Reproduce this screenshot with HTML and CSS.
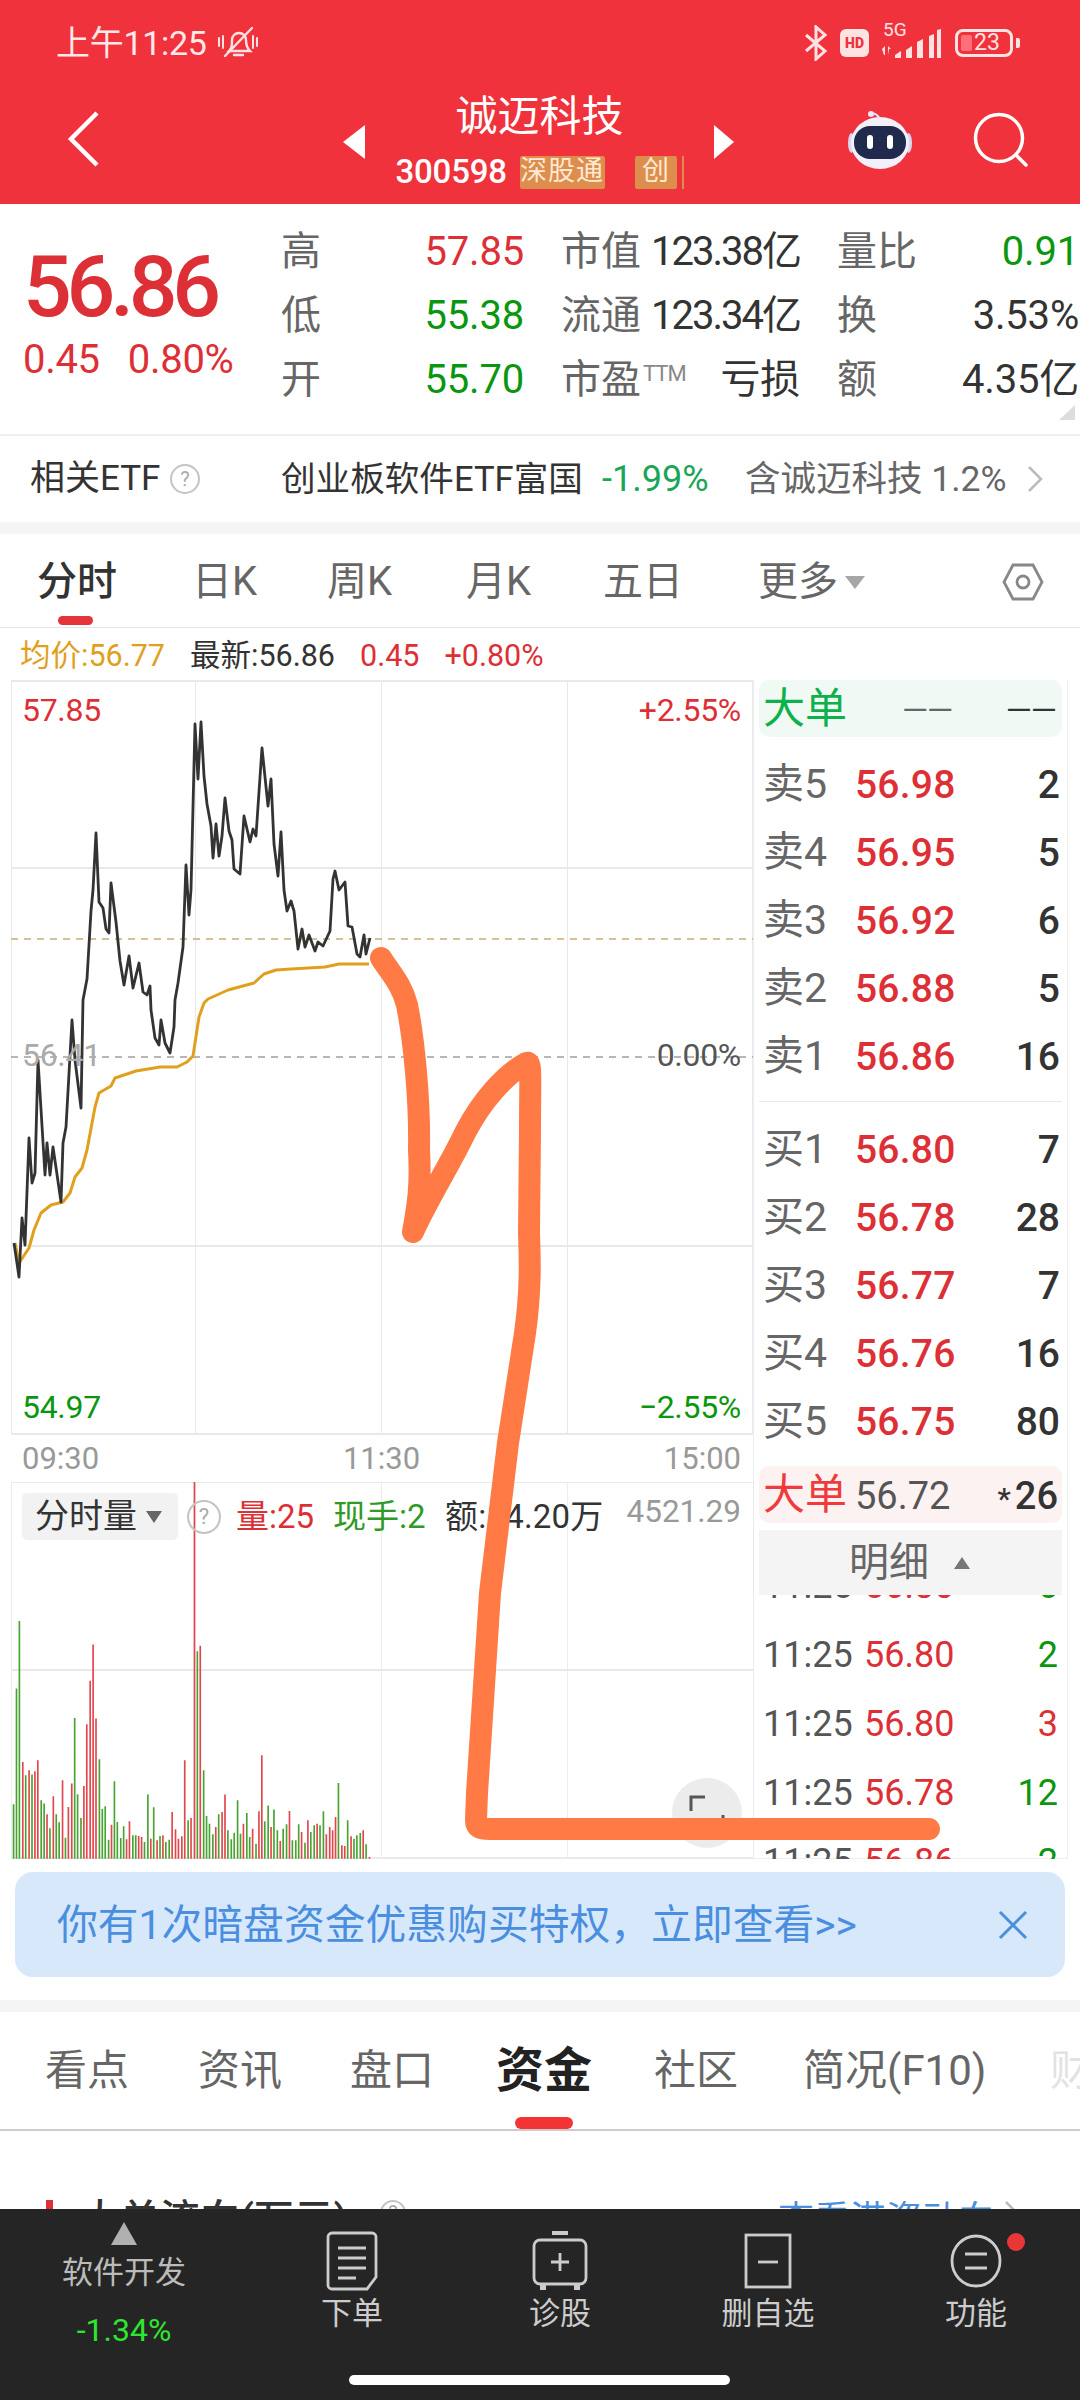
FILE: index.html
```html
<!DOCTYPE html>
<html lang="zh-CN">
<head>
<meta charset="utf-8">
<title>诚迈科技</title>
<link rel="stylesheet" href="styles.css">
</head>
<body>
<div class="app">
  <header class="top">
    <div class="status">
      <div class="status-left">
        <span class="clock">上午11:25</span>
        <svg class="ico-bell" viewBox="0 0 42 36" fill="none" stroke="#ffe3e3" stroke-width="2.4" stroke-linecap="round"><path d="M12 26c3-3 3-6 3-11 0-4 3-7 7-7s7 3 7 7c0 5 1 8 4 11z"/><path d="M17 30h9"/><path d="M8 31 35 3"/><path d="M2 13v8M6 11v12M36 11v12M40 13v8" stroke-width="2"/></svg>
      </div>
      <div class="status-right">
        <svg class="ico-bt" viewBox="0 0 24 36" fill="none" stroke="#ffe3e3" stroke-width="3"><path d="M2 10l19 16-9 8V2l9 8L2 26"/></svg>
        <span class="hd">HD</span>
        <div class="net">
          <span class="net-label">5G</span>
          <svg class="ico-sig" viewBox="0 0 60 30" fill="#ffe3e3"><path d="M1 20l3-3v9h-1zM7 26v-9l3 3h-2zM14 29h6v-7l-6 4zM25 29h6V17l-6 4zM36 29h6V10l-6 3zM48 29h5V5l-5 2zM56 29h4V0l-4 1z"/></svg>
        </div>
        <div class="battery"><span class="batt-fill"></span><span class="batt-num">23</span></div>
        <span class="batt-nub"></span>
      </div>
    </div>
    <nav class="nav">
      <div class="nav-back">
        <svg class="ico-back" viewBox="0 0 32 56" fill="none" stroke="#fff" stroke-width="4.5"><path d="M30 2 4 28l26 26"/></svg>
      </div>
      <div class="nav-center">
        <span class="tri-left"></span>
        <div class="nav-title">
          <div class="title">诚迈科技</div>
          <div class="code-row"><span class="code">300598</span><span class="badge badge-wide">深股通</span><span class="badge">创</span><span class="badge-cut"></span></div>
        </div>
        <span class="tri-right"></span>
      </div>
      <div class="nav-right">
        <svg class="ico-robot" viewBox="0 0 64 60"><path d="M32 10c-2-6-6-7-9-6" fill="none" stroke="#e6e4f7" stroke-width="2.2"/><circle cx="23" cy="4" r="3" fill="#e9e8fa"/><ellipse cx="3.500" cy="33" rx="3.500" ry="10" fill="#d8d6f0"/><ellipse cx="60.500" cy="33" rx="3.500" ry="10" fill="#d8d6f0"/><ellipse cx="32" cy="33" rx="29" ry="26" fill="#f1f0fb"/><rect x="6" y="16" width="52" height="33" rx="16" fill="#1f2a4d"/><rect x="19" y="25" width="6" height="14" rx="3" fill="#fff"/><rect x="39" y="25" width="6" height="14" rx="3" fill="#fff"/></svg>
        <svg class="ico-search" viewBox="0 0 56 56" fill="none" stroke="#fff" stroke-width="3.500"><circle cx="26" cy="26" r="23.500"/><path d="M43 43l10 10" stroke-linecap="round"/></svg>
      </div>
    </nav>
  </header>

  <section class="quote">
    <div class="q-left">
      <div class="q-price">56.86</div>
      <div class="q-change"><span>0.45</span><span>0.80%</span></div>
    </div>
    <div class="q-grid">
      <div class="q-cell"><span class="lbl">高</span><span class="up">57.85</span></div>
      <div class="q-cell"><span class="lbl">市值</span><span class="dark tight">123.38亿</span></div>
      <div class="q-cell"><span class="lbl">量比</span><span class="down">0.91</span></div>
      <div class="q-cell"><span class="lbl">低</span><span class="down">55.38</span></div>
      <div class="q-cell"><span class="lbl">流通</span><span class="dark tight">123.34亿</span></div>
      <div class="q-cell"><span class="lbl">换</span><span class="dark">3.53%</span></div>
      <div class="q-cell"><span class="lbl">开</span><span class="down">55.70</span></div>
      <div class="q-cell"><span class="lbl">市盈<sup class="ttm">TTM</sup></span><span class="dark">亏损</span></div>
      <div class="q-cell"><span class="lbl">额</span><span class="dark">4.35亿</span></div>
    </div>
    <span class="q-corner"></span>
  </section>

  <section class="etf">
    <span class="etf-title">相关ETF</span><span class="help etf-help">?</span>
    <span class="etf-name">创业板软件ETF富国</span>
    <span class="etf-pct">-1.99%</span>
    <span class="etf-note">含诚迈科技 1.2%</span>
    <svg class="ico-more" viewBox="0 0 16 28" fill="none" stroke="#bbb" stroke-width="2.500"><path d="M2 2l12 12L2 26"/></svg>
  </section>
  <div class="band"></div>

  <section class="tabs">
    <span class="tab tab-on w155">分时</span>
    <span class="tab w135">日K</span>
    <span class="tab w139">周K</span>
    <span class="tab w137">月K</span>
    <span class="tab w155">五日</span>
    <span class="tab">更多<i class="tri-down"></i></span>
    <svg class="ico-hex" viewBox="0 0 42 38" fill="none" stroke="#888" stroke-width="2.800"><path d="M11 2h20l9 17-9 17H11L2 19z"/><circle cx="21" cy="19" r="6"/></svg>
  </section>

  <section class="info">
    <span class="avg">均价:56.77</span>
    <span class="dark">最新:56.86</span>
    <span class="up">0.45</span>
    <span class="up">+0.80%</span>
  </section>

  <section class="board">
    <div class="charts">
      <div class="price-chart">
        <svg class="price-svg" viewBox="0 680 754 756" fill="none">
          <g stroke="#e9e9e9" stroke-width="1" shape-rendering="crispEdges">
            <path d="M195.500 680V1434M381.500 680V1434M567.500 680V1434M11.500 680V1434M752.500 680V1434"/>
            <path d="M11 868h742M11 1246h742M11 681h742M11 1434h742" stroke-width="2"/>
          </g>
          <path d="M11 939h742" stroke="#c9ab78" stroke-width="1.500" stroke-dasharray="7 6"/>
          <path d="M11 1057h742" stroke="#a0a0a0" stroke-width="1.500" stroke-dasharray="7 6"/>
          <path stroke="#e0a01e" stroke-width="3" stroke-linejoin="round" d="M15 1243 19 1263 29 1248 34 1230 41 1213 51 1205 63 1202 70 1193 75 1177 82 1168 87 1150 95 1107 99 1093 111 1086 115 1078 136 1071 160 1067 177 1067 187 1062 193 1056 199 1017 204 1003 208 999 228 990 254 983 264 974 276 970 291 969 325 967 339 964 369 964"/>
          <path stroke="#333" stroke-width="2.800" stroke-linejoin="round" d="M14 1243 19 1277 22 1218 25 1245 29 1138 32 1183 35 1173 38 1060 45 1175 47 1143 50 1175 53 1147 61 1202 63 1143 66 1127 72 1020 75 1060 81 1108 83 1000 87 979 91 911 93 890 96 833 99 902 103 908 106 929 109 933 111 883 116 922 120 961 124 985 129 956 133 988 139 963 143 992 147 995 150 986 151 1010 155 1038 159 1045 161 1020 165 1043 170 1053 174 1027 175 1000 178 983 183 947 186 865 189 915 191 890 195 724 198 779 201 722 204 776 207 804 211 826 213 858 216 824 219 856 222 836 225 798 229 831 232 840 234 869 240 874 244 816 250 842 253 829 256 836 262 748 268 806 271 779 274 844 278 876 281 832 284 890 287 911 291 901 294 911 298 949 302 929 305 947 309 935 315 951 318 942 323 946 330 931 333 879 335 871 339 890 345 882 348 926 352 927 357 954 360 957 364 935 366 954 370 938"/>
        </svg>
        <span class="cl cl-tl up">57.85</span>
        <span class="cl cl-tr up">+2.55%</span>
        <span class="cl cl-ml muted">56.41</span>
        <span class="cl cl-mr">0.00%</span>
        <span class="cl cl-bl down">54.97</span>
        <span class="cl cl-br down">−2.55%</span>
      </div>
      <div class="times"><span>09:30</span><span>11:30</span><span>15:00</span></div>
      <div class="vol-chart">
        <svg class="vol-svg" viewBox="0 66 1555 1130" preserveAspectRatio="none" fill="none">
          <g stroke="#e9e9e9" shape-rendering="crispEdges">
            <path d="M403 66V1195M787 66V1195M1170 66V1195M23 66V1195M1553 66V1195" stroke-width="2"/>
            <path d="M23 630H1553M23 67H1553M23 1194H1553" stroke-width="6"/>
          </g>
          <path stroke="#46a32f" stroke-width="3.400" d="M28 1195V1032M34 1195V685M40 1195V483M53 1195V945M66 1195V943M85 1195V1020M91 1195V1030M103 1195V1104M116 1195V1062M122 1195V1086M135 1195V1132M154 1195V773M160 1195V1002M167 1195V1073M205 1195V897M211 1195V1046M217 1195V1038M224 1195V1138M236 1195V963M242 1195V1085M249 1195V1133M255 1195V1098M274 1195V1125M280 1195V1125M298 1195V1145M305 1195V1003M317 1195V1041M330 1195V1127M342 1195V1145M349 1195V1138M388 1195V1080M407 1195V573M420 1195V930M426 1195V1067M432 1195V1090M439 1195V1122M451 1195V1062M470 1195V1110M477 1195V1137M483 1195V1117M490 1195V1020M496 1195V1120M509 1195V1058M515 1195V1130M528 1195V1150M546 1195V1083M553 1195V1036M565 1195V1048M572 1195V1110M584 1195V1105M591 1195V1092M603 1195V1140M610 1195V1140M616 1195V1092M629 1195V1147M641 1195V1115M648 1195V1095M660 1195V1095M667 1195V1053M698 1195V968M717 1195V1080M730 1195V1135M736 1195V1125M743 1195V1118M755 1195V1152"/>
          <path stroke="#e2454c" stroke-width="3.400" d="M47 1195V905M60 1195V930M72 1195V933M78 1195V900M97 1195V1062M110 1195V1008M129 1195V960M141 1195V1040M148 1195V970M173 1195V977M179 1195V792M186 1195V662M192 1195V553M198 1195V775M230 1195V1093M261 1195V1137M267 1195V1083M286 1195V1127M292 1195V1130M311 1195V1135M324 1195V1140M336 1195V1125M355 1195V1055M362 1195V1107M368 1195V1135M375 1195V1128M381 1195V900M394 1195V1073M401 1195V62M413 1195V557M445 1195V1100M458 1195V1055M464 1195V1003M502 1195V1090M521 1195V1105M534 1195V1053M540 1195V885M559 1195V1100M578 1195V1142M597 1195V1052M622 1195V1115M635 1195V1080M654 1195V1090M673 1195V1122M680 1195V1100M686 1195V1110M692 1195V1070M705 1195V1155M711 1195V1157M724 1195V1128M749 1195V1110M762 1195V1190"/>
        </svg>
        <div class="vol-head">
          <span class="vol-btn">分时量<i class="tri-down tri-dark"></i></span>
          <span class="help vol-help">?</span>
          <span class="up vol-a">量:25</span>
          <span class="vol-g vol-b">现手:2</span>
          <span class="dark vol-c">额:14.20万</span>
          <span class="vol-max">4521.29</span>
        </div>
        <span class="full">
          <svg class="ico-full" viewBox="0 0 36 36" fill="none" stroke="#555" stroke-width="3"><path d="M2 16V2h14M34 20v14H20"/></svg>
        </span>
      </div>
    </div>

    <aside class="book">
      <div class="big big-g"><span class="big-lbl">大单</span><span class="dash">——</span><span class="dash dash-d">——</span></div>
      <div class="levels">
        <div class="lv"><span class="lv-k">卖5</span><b>56.98</b><span class="lv-v">2</span></div>
        <div class="lv"><span class="lv-k">卖4</span><b>56.95</b><span class="lv-v">5</span></div>
        <div class="lv"><span class="lv-k">卖3</span><b>56.92</b><span class="lv-v">6</span></div>
        <div class="lv"><span class="lv-k">卖2</span><b>56.88</b><span class="lv-v">5</span></div>
        <div class="lv"><span class="lv-k">卖1</span><b>56.86</b><span class="lv-v">16</span></div>
      </div>
      <div class="book-sep"></div>
      <div class="levels">
        <div class="lv"><span class="lv-k">买1</span><b>56.80</b><span class="lv-v">7</span></div>
        <div class="lv"><span class="lv-k">买2</span><b>56.78</b><span class="lv-v">28</span></div>
        <div class="lv"><span class="lv-k">买3</span><b>56.77</b><span class="lv-v">7</span></div>
        <div class="lv"><span class="lv-k">买4</span><b>56.76</b><span class="lv-v">16</span></div>
        <div class="lv"><span class="lv-k">买5</span><b>56.75</b><span class="lv-v">80</span></div>
      </div>
      <div class="big big-r"><span class="big-lbl">大单</span><span class="big-p">56.72</span><span class="big-v"><i>*</i>26</span></div>
      <div class="detail-head">明细<i class="tri-up"></i></div>
      <div class="detail-clip">
        <div class="detail">
          <div class="dt"><span class="dt-t">11:25</span><span class="up">56.80</span><span class="dt-v down">5</span></div>
          <div class="dt"><span class="dt-t">11:25</span><span class="up">56.80</span><span class="dt-v down">2</span></div>
          <div class="dt"><span class="dt-t">11:25</span><span class="up">56.80</span><span class="dt-v up">3</span></div>
          <div class="dt"><span class="dt-t">11:25</span><span class="up">56.78</span><span class="dt-v down">12</span></div>
          <div class="dt"><span class="dt-t">11:25</span><span class="up">56.86</span><span class="dt-v down">2</span></div>
        </div>
      </div>
    </aside>
  </section>

  <section class="promo">
    <span class="promo-text">你有1次暗盘资金优惠购买特权，立即查看&gt;&gt;</span>
    <svg class="ico-x" viewBox="0 0 30 30" fill="none" stroke="#4a8fdf" stroke-width="3"><path d="M2 2l26 26M28 2 2 28"/></svg>
  </section>
  <div class="band band-2"></div>

  <section class="sub">
    <span class="sub-t w153">看点</span>
    <span class="sub-t w152">资讯</span>
    <span class="sub-t w146">盘口</span>
    <span class="sub-t sub-on w158">资金</span>
    <span class="sub-t w149">社区</span>
    <span class="sub-t w247">简况(F10)</span>
    <span class="sub-t sub-fade">财务</span>
  </section>

  <section class="flow">
    <span class="flow-bar"></span>
    <span class="flow-title">大单流向(万元)</span>
    <span class="help flow-help">?</span>
    <span class="flow-link">查看港资动向</span>
    <svg class="ico-more flow-more" viewBox="0 0 16 28" fill="none" stroke="#bbb" stroke-width="2.500"><path d="M2 2l12 12L2 26"/></svg>
  </section>

  <footer class="dock">
    <div class="dock-row">
      <div class="dock-sector">
        <span class="tri-sector"></span>
        <span class="sector-name">软件开发</span>
        <span class="sector-pct">-1.34%</span>
      </div>
      <div class="dock-item">
        <svg class="dock-ico" viewBox="0 0 56 60" fill="none" stroke="#ccc" stroke-width="2.800"><path d="M8 2h40a4 4 0 0 1 4 4v40l-9 12H8a4 4 0 0 1-4-4V6a4 4 0 0 1 4-4z"/><path d="M14 17h28M14 27h28M14 37h28M14 47h18"/></svg>
        <span>下单</span>
      </div>
      <div class="dock-item">
        <svg class="dock-ico" viewBox="0 0 60 60" fill="none" stroke="#ccc" stroke-width="2.800"><path d="M22 2h16" stroke-width="4"/><rect x="4" y="9" width="52" height="44" rx="6"/><path d="M30 22v18M21 31h18"/><path d="M13 53v6M47 53v6" stroke-width="6"/></svg>
        <span>诊股</span>
      </div>
      <div class="dock-item">
        <svg class="dock-ico" viewBox="0 0 60 60" fill="none" stroke="#ccc" stroke-width="2.800"><rect x="8" y="4" width="44" height="52"/><path d="M20 31h20"/></svg>
        <span>删自选</span>
      </div>
      <div class="dock-item">
        <svg class="dock-ico" viewBox="0 0 60 60" fill="none" stroke="#ccc" stroke-width="2.800"><ellipse cx="30" cy="30" rx="24" ry="25"/><path d="M19 23h22M19 37h22"/></svg>
        <span class="dock-dot"></span>
        <span>功能</span>
      </div>
    </div>
    <div class="homebar"></div>
  </footer>

  <svg class="scribble" viewBox="0 0 1080 2400" fill="none">
    <path stroke="#ff7a45" stroke-width="22" stroke-linecap="round" stroke-linejoin="round" d="M381 958C392 975 402 985 407 1005 414 1040 420 1100 419 1150 421 1185 418 1205 413 1232 430 1195 447 1170 465 1133 482 1100 505 1075 526 1063 532 1060 530 1075 530 1130L529 1233C530 1260 531 1290 525 1333L508 1443 490 1593 485 1670 477 1793 476 1820C476 1828 480 1829 490 1829L929 1829"/>
  </svg>
</div>
</body>
</html>
```

FILE: styles.css
```css
* { box-sizing: border-box; }
html, body { margin: 0; padding: 0; background: #fff; }
body { font-family: Roboto, "Noto Sans CJK SC", sans-serif; color: #333; }
i { font-style: normal; }
.app { position: relative; width: 1080px; height: 2400px; overflow: hidden; background: #fff; }

.up { color: #dd3036; }
.down { color: #0a970f; }
.dark { color: #333; }
.muted { color: #aaa; }

/* header */
.top { height: 204px; background: #f0323c; color: #fff; }
.status { height: 72px; padding: 14px 60px 0 56px; display: flex; justify-content: space-between; align-items: center; }
.status-left { display: flex; align-items: center; gap: 10px; }
.clock { font-size: 34px; line-height: 40px; color: #ffe8e8; letter-spacing: -.3px; }
.ico-bell { width: 42px; height: 36px; }
.status-right { display: flex; align-items: center; }
.ico-bt { width: 24px; height: 36px; margin-right: 12px; }
.hd { width: 29px; height: 28px; border-radius: 6px; background: #ffe3e3; color: #f0323c; font-size: 14px; font-weight: 900; line-height: 28px; text-align: center; margin-right: 12px; }
.net { position: relative; width: 62px; height: 32px; margin-right: 12px; }
.net-label { position: absolute; left: 2px; top: -7px; font-size: 19px; line-height: 20px; color: #ffe3e3; }
.ico-sig { position: absolute; left: 0; bottom: 0; width: 60px; height: 30px; }
.battery { position: relative; width: 58px; height: 28px; border: 3px solid #ffe3e3; border-radius: 8px; text-align: center; }
.batt-fill { position: absolute; left: 3px; top: 3px; bottom: 3px; width: 11px; background: #ff6f78; border-radius: 2px; }
.batt-num { position: relative; font-size: 23px; line-height: 22px; display: block; color: #ffe3e3; padding-left: 6px; }
.batt-nub { width: 4px; height: 10px; border-radius: 0 2px 2px 0; background: #ffe3e3; margin-left: 3px; }

.nav { height: 132px; display: grid; grid-template-columns: 343px 391px 346px; align-items: center; }
.nav-back { padding: 2px 0 0 67px; display: flex; align-items: center; height: 100%; }
.ico-back { width: 32px; height: 56px; }
.nav-center { display: flex; justify-content: space-between; align-items: center; height: 100%; padding-top: 8px; }
.tri-left { width: 0; height: 0; border-style: solid; border-width: 17px 22px 17px 0; border-color: transparent #fff transparent transparent; }
.tri-right { width: 0; height: 0; border-style: solid; border-width: 17px 0 17px 20px; border-color: transparent transparent transparent #fff; }
.nav-title { width: 288px; align-self: flex-start; padding-top: 9px; display: flex; flex-direction: column; align-items: center; }
.title { font-size: 42px; line-height: 56px; color: #fff; }
.code-row { align-self: flex-start; display: flex; align-items: center; height: 34px; margin-top: 10px; }
.code { font-size: 33px; line-height: 34px; width: 124px; font-weight: 500; letter-spacing: -.2px; color: #fff; }
.badge { height: 33px; width: 42px; background: #dd8d4c; border-radius: 2px; color: #ffe9d4; font-size: 27px; line-height: 31px; text-align: center; }
.badge-wide { width: 85px; margin-right: 30px; letter-spacing: 1px; white-space: nowrap; font-size: 27px; }
.badge-cut { width: 2px; height: 33px; background: #dd8d4c; margin-left: 5px; }
.nav-right { display: flex; align-items: center; height: 100%; padding: 4px 0 0 114px; }
.ico-robot { width: 64px; height: 60px; }
.ico-search { width: 56px; height: 56px; margin-left: 61px; }

/* quote */
.quote { position: relative; height: 232px; border-bottom: 2px solid #efefef; display: flex; font-size: 40px; }
.q-left { width: 281px; padding: 39px 0 0 23px; }
.q-price { font-size: 86px; line-height: 88px; font-weight: 500; color: #dd3036; letter-spacing: -5.300px; }
.q-change { display: flex; gap: 28px; font-size: 40px; line-height: 44px; margin-top: 7px; color: #dd3036; letter-spacing: -.3px; }
.q-grid { width: 799px; padding-top: 16px; display: grid; grid-template-columns: 243px 239px 242px; column-gap: 37px; grid-auto-rows: 64px; align-content: start; }
.q-cell { display: flex; justify-content: space-between; align-items: baseline; line-height: 64px; letter-spacing: -.2px; white-space: nowrap; }
.tight { letter-spacing: -2px; }
.lbl { color: #666; letter-spacing: 0; }
.ttm { font-size: 22px; color: #888; vertical-align: 12px; line-height: 0; margin-left: 2px; letter-spacing: -1px; }
.q-corner { position: absolute; right: 5px; top: 201px; width: 0; height: 0; border-style: solid; border-width: 0 0 15px 16px; border-color: transparent transparent #ddd transparent; }

/* etf */
.etf { height: 86px; display: flex; align-items: center; font-size: 35px; line-height: 44px; padding: 0 0 0 30px; white-space: nowrap; }
.etf-title { width: 140px; color: #333; }
.help { display: inline-flex; align-items: center; justify-content: center; width: 30px; height: 30px; border: 2px solid #c4c4c4; border-radius: 50%; font-size: 20px; line-height: 26px; color: #aaa; flex: none; }
.etf-help { margin-right: 81px; }
.etf-name { width: 321px; color: #333; font-size: 34.600px; }
.etf-pct { width: 143px; color: #1aa658; font-size: 36px; }
.etf-note { width: 282px; color: #666; font-size: 35.500px; }
.ico-more { width: 16px; height: 28px; }
.band { height: 12px; background: #f5f5f5; }

/* tabs */
.tabs { height: 94px; display: flex; align-items: center; padding: 2px 36px 0 37px; border-bottom: 1px solid #e5e5e5; font-size: 40px; line-height: 50px; color: #666; }
.tab { position: relative; display: block; white-space: nowrap; }
.w155 { width: 155px; } .w135 { width: 135px; } .w139 { width: 139px; } .w137 { width: 137px; }
.tab-on { color: #333; font-weight: 500; }
.tab-on::after { content: ""; position: absolute; left: 21px; top: 59px; width: 35px; height: 9px; border-radius: 5px; background: #e5333a; }
.tri-down { display: inline-block; width: 0; height: 0; border-style: solid; border-width: 13px 10px 0; border-color: #a6a6a6 transparent transparent; margin-left: 7px; vertical-align: 6px; }
.ico-hex { width: 42px; height: 38px; margin-left: auto; }

/* info */
.info { height: 52px; padding: 4px 0 0 20px; display: flex; align-items: center; font-size: 30.500px; line-height: 40px; gap: 25px; white-space: nowrap; }
.avg { color: #e0a01e; }

/* board */
.board { display: flex; height: 1179px; align-items: flex-start; }
.charts { width: 753px; flex: none; }
.price-chart { position: relative; height: 754px; }
.price-svg { position: absolute; left: 0; top: 0; width: 754px; height: 756px; }
.cl { position: absolute; font-size: 32px; line-height: 36px; letter-spacing: -.3px; }
.cl-tl { left: 22px; top: 12px; }
.cl-tr { right: 12px; top: 12px; }
.cl-ml { left: 22px; top: 357px; }
.cl-mr { right: 12px; top: 357px; color: #555; }
.cl-bl { left: 22px; top: 709px; }
.cl-br { right: 12px; top: 709px; }
.times { height: 48px; display: flex; justify-content: space-between; padding: 2px 12px 0 22px; align-items: center; font-size: 31px; line-height: 40px; color: #999; }
.vol-chart { position: relative; height: 377px; }
.vol-svg { position: absolute; left: 0; top: 0; width: 754px; height: 377px; }
.vol-head { position: relative; display: flex; align-items: center; padding: 11px 12px 0 22px; font-size: 33px; line-height: 44px; white-space: nowrap; }
.vol-btn { width: 156px; height: 47px; background: #f2f2f2; border-radius: 5px; padding-left: 13px; line-height: 46px; font-size: 34px; color: #333; }
.tri-dark { border-top-color: #666; border-width: 12px 8px 0; margin-left: 9px; vertical-align: 5px; }
.vol-help { width: 34px; height: 34px; margin: 0 15px 0 9px; font-size: 22px; }
.vol-a { width: 97px; }
.vol-g { color: #2f9a25; }
.vol-b { width: 112px; }
.vol-c { width: 178px; letter-spacing: .2px; }
.vol-max { margin-left: auto; color: #999; font-size: 31.500px; margin-top: -10px; }
.full { position: absolute; left: 672px; top: 296px; width: 70px; height: 70px; border-radius: 50%; background: #ececec; display: flex; align-items: center; justify-content: center; }
.ico-full { width: 36px; height: 36px; }

/* order book */
.book { width: 315px; height: 1179px; border: 1px solid #eee; border-width: 0 1px 1px; padding: 0 5px; }
.big { height: 57px; display: flex; align-items: baseline; border-radius: 10px; padding: 0 4px; line-height: 57px; white-space: nowrap; }
.big-g { background: #f1f9f4; margin-bottom: 13px; }
.big-lbl { font-size: 42px; width: 92px; }
.big-g .big-lbl { color: #0db14b; }
.dash { align-self: center; font-family: "Liberation Sans", sans-serif; font-size: 22px; font-weight: 700; letter-spacing: 3px; color: #666; width: 108px; margin-left: 53px; }
.dash-d { color: #333; margin-left: 0; width: 50px; }
.levels { display: flex; flex-direction: column; }
.lv { height: 68px; display: flex; align-items: baseline; font-size: 39px; line-height: 68px; padding: 0 2px 0 4px; white-space: nowrap; }
.lv-k { width: 92px; color: #666; font-size: 41px; }
.lv b { font-weight: 500; color: #dd3036; letter-spacing: .2px; }
.lv-v { margin-left: auto; color: #333; font-weight: 500; }
.book-sep { height: 1px; background: #e8e8e8; margin: 11px 0 13px; }
.big-r { background: #fdf2f2; margin-top: 11px; }
.big-r .big-lbl { color: #ef3b3b; }
.big-p { font-size: 38px; color: #555; }
.big-v { margin-left: auto; font-size: 38px; color: #333; font-weight: 500; }
.big-v i { font-size: 30px; margin-right: 4px; }
.detail-head { height: 65px; margin-top: 7px; background: #f4f4f4; display: flex; align-items: center; justify-content: center; font-size: 40px; line-height: 50px; color: #666; padding-right: 2px; }
.tri-up { width: 0; height: 0; border-style: solid; border-width: 0 8px 12px; border-color: transparent transparent #777; margin-left: 25px; }
.detail-clip { height: 264px; overflow: hidden; }
.detail { margin-top: -43px; }
.dt { height: 69px; display: flex; align-items: baseline; font-size: 36px; line-height: 69px; padding: 0 4px; white-space: nowrap; }
.dt-t { width: 101px; color: #555; }
.dt-v { margin-left: auto; }

/* promo */
.promo { margin: 13px 15px 0; height: 105px; background: #d8e8fb; border-radius: 18px; display: flex; align-items: center; justify-content: space-between; padding: 0 37px 0 42px; }
.promo-text { font-size: 40.800px; line-height: 50px; color: #4a8fdf; white-space: nowrap; }
.ico-x { width: 30px; height: 30px; }
.band-2 { margin-top: 23px; }

/* sub tabs */
.sub { height: 119px; padding: 0 0 0 45px; display: flex; align-items: center; border-bottom: 2px solid #ccc; font-size: 42px; line-height: 54px; color: #666; white-space: nowrap; overflow: hidden; }
.sub-t { position: relative; display: block; flex: none; }
.w153 { width: 153px; } .w152 { width: 152px; } .w146 { width: 146px; } .w158 { width: 158px; } .w149 { width: 149px; } .w247 { width: 247px; }
.sub-on { font-size: 48px; font-weight: 700; color: #222; }
.sub-on::after { content: ""; position: absolute; left: 19px; top: 73px; width: 58px; height: 12px; border-radius: 6px; background: #f33434; }
.sub-fade { opacity: .18; }

/* flow */
.flow { height: 78px; padding: 66px 0 0 46px; display: flex; align-items: flex-start; white-space: nowrap; }
.flow-bar { width: 7px; height: 40px; margin-top: 3px; background: #dd3036; margin-right: 27px; }
.flow-title { font-size: 40px; font-weight: 500; line-height: 46px; color: #333; width: 300px; }
.flow-help { width: 26px; height: 26px; margin-top: 3px; }
.flow-link { font-size: 36px; line-height: 46px; color: #4a8fdf; margin-left: 372px; }
.flow-more { margin: 3px 0 0 10px; }

/* dock */
.dock { height: 191px; background: #252525; position: relative; }
.dock-row { display: flex; height: 170px; }
.dock-sector { width: 248px; display: flex; flex-direction: column; align-items: center; color: #bbb; }
.tri-sector { width: 0; height: 0; margin-top: 13px; border-style: solid; border-width: 0 13px 23px; border-color: transparent transparent #b0b0b0; }
.sector-name { font-size: 31px; line-height: 38px; margin-top: 9px; }
.sector-pct { font-size: 32px; line-height: 38px; margin-top: 19px; color: #2ee62e; }
.dock-item { position: relative; width: 208px; display: flex; flex-direction: column; align-items: center; font-size: 31px; line-height: 38px; color: #ccc; padding-top: 22px; }
.dock-ico { width: 60px; height: 60px; }
.dock-item span:last-child { margin-top: 4px; }
.dock-dot { position: absolute; left: 135px; top: 24px; width: 18px; height: 18px; border-radius: 50%; background: #e93636; }
.homebar { position: absolute; left: 349px; top: 166px; width: 381px; height: 10px; background: #fff; border-radius: 5px; }

.scribble { position: absolute; left: 0; top: 0; width: 1080px; height: 2400px; pointer-events: none; }
```
